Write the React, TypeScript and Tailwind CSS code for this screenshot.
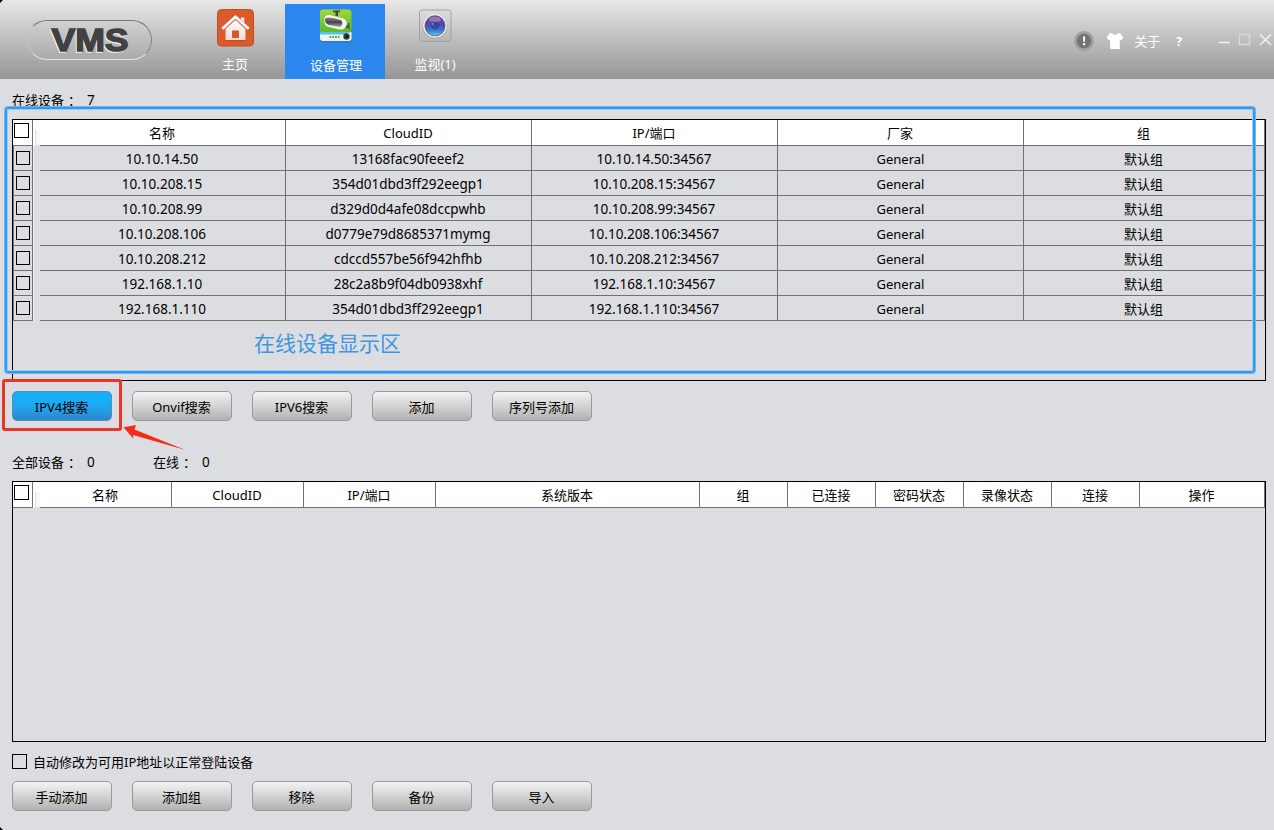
import { ReactNode } from 'react';
import { clsx } from 'clsx';

interface Device {
  name: string;
  cloudId: string;
  address: string;
}

const devices: Device[] = [
  { name: '10.10.14.50', cloudId: '13168fac90feeef2', address: '10.10.14.50:34567' },
  { name: '10.10.208.15', cloudId: '354d01dbd3ff292eegp1', address: '10.10.208.15:34567' },
  { name: '10.10.208.99', cloudId: 'd329d0d4afe08dccpwhb', address: '10.10.208.99:34567' },
  { name: '10.10.208.106', cloudId: 'd0779e79d8685371mymg', address: '10.10.208.106:34567' },
  { name: '10.10.208.212', cloudId: 'cdccd557be56f942hfhb', address: '10.10.208.212:34567' },
  { name: '192.168.1.10', cloudId: '28c2a8b9f04db0938xhf', address: '192.168.1.10:34567' },
  { name: '192.168.1.110', cloudId: '354d01dbd3ff292eegp1', address: '192.168.1.110:34567' },
];

const onlineColumns = [
  { label: '名称', width: 'w-[246px]' },
  { label: 'CloudID', width: 'w-[246px]' },
  { label: 'IP/端口', width: 'w-[246px]' },
  { label: '厂家', width: 'w-[246px]' },
  { label: '组', width: 'w-[241px]' },
];

const allColumns = [
  { label: '名称', width: 'w-[132px]' },
  { label: 'CloudID', width: 'w-[132px]' },
  { label: 'IP/端口', width: 'w-[132px]' },
  { label: '系统版本', width: 'w-[264px]' },
  { label: '组', width: 'w-[88px]' },
  { label: '已连接', width: 'w-[88px]' },
  { label: '密码状态', width: 'w-[88px]' },
  { label: '录像状态', width: 'w-[88px]' },
  { label: '连接', width: 'w-[88px]' },
  { label: '操作', width: 'w-[125px]' },
];

function HomeIcon() {
  return (
    <svg width="38" height="38" viewBox="0 0 38 38">
      <defs>
        <linearGradient id="homeWall" x1="0" y1="0" x2="0" y2="1">
          <stop offset="0" stopColor="#fff" />
          <stop offset="1" stopColor="#f3d9d0" />
        </linearGradient>
      </defs>
      <rect x="0.5" y="0.5" width="36" height="36.500" rx="4" fill="#d95a2b" stroke="#c24d22" />
      <path d="M8.500 19 18.500 10l10 9v12h-20z" fill="#9c3a16" opacity="0.450" transform="translate(0 1)" />
      <path d="M8.500 19 18.500 10l10 9v12h-20z" fill="url(#homeWall)" />
      <path d="M23.800 8.500h3.500v8h-3.500z" fill="#fbeee9" />
      <path d="m5.300 20.300 13.200-12 13.200 12" fill="none" stroke="#d06a45" strokeWidth="4" />
      <path d="m5.300 19.800 13.200-12 13.200 12" fill="none" stroke="#fff" strokeWidth="2.600" />
      <path d="M15 21.500h7v7.500h-7z" fill="#cf5a30" />
    </svg>
  );
}

function CameraIcon() {
  return (
    <svg width="34" height="34" viewBox="0 0 34 34">
      <defs>
        <linearGradient id="camGreen" x1="0" y1="0" x2="0" y2="1">
          <stop offset="0" stopColor="#a2d83a" />
          <stop offset="1" stopColor="#3fae22" />
        </linearGradient>
        <linearGradient id="camBody" x1="0" y1="0" x2="0" y2="1">
          <stop offset="0" stopColor="#8a8c8e" />
          <stop offset="0.5" stopColor="#454545" />
          <stop offset="1" stopColor="#a5a7a9" />
        </linearGradient>
      </defs>
      <rect x="1" y="1" width="31.5" height="32.500" rx="3" fill="#2c6f9c" opacity="0.5" />
      <rect x="1" y="0.5" width="31.5" height="31.5" rx="3" fill="url(#camGreen)" />
      <path d="M1 23h31.5v6a3 3 0 0 1-3 3H4a3 3 0 0 1-3-3z" fill="#eef4f5" />
      <path d="M1 23h31.5l-7 2.5H1z" fill="#52c4e8" />
      <path d="M14 1.500h7v1.800h-2V7h-2.500V3.300H14z" fill="#3d4a38" />
      <path d="m26 17 3-1v-2h1.500v6H29v-1.500l-3 1z" fill="#4b524b" />
      <path d="M5.500 9c.5-3 3.500-3.600 7-2.600l11 2.800c4 1.200 5 4.400 3.500 8.300-1.200 2.700-3.700 3.500-6.500 2.900L9 17.800c-3-.8-4.200-4.800-3.500-8.800z" fill="#f4f6f6" />
      <path d="M6 9.500c2-1.200 5-1 8-.4l7.500 2c2.500 1 2.500 6-.5 6.800L9.500 16C7 15.200 5.600 12.500 6 9.500z" fill="url(#camBody)" />
      <path d="M10.500 28h10" stroke="#4eae35" strokeWidth="2" strokeDasharray="1.800 1" />
      <circle cx="27.500" cy="27.500" r="3.200" fill="#333a3d" />
      <circle cx="27.500" cy="27.500" r="1.200" fill="#10171a" />
    </svg>
  );
}

function LensIcon() {
  return (
    <svg width="34" height="34" viewBox="0 0 34 34">
      <defs>
        <linearGradient id="lensPlate" x1="0" y1="0" x2="0" y2="1">
          <stop offset="0" stopColor="#dedede" />
          <stop offset="1" stopColor="#b5b5b5" />
        </linearGradient>
        <linearGradient id="lensGlass" x1="0" y1="0" x2="0" y2="1">
          <stop offset="0" stopColor="#6f4c9a" />
          <stop offset="0.450" stopColor="#5149ae" />
          <stop offset="0.750" stopColor="#337fcd" />
          <stop offset="1" stopColor="#65c5e9" />
        </linearGradient>
      </defs>
      <rect x="0.500" y="1" width="31.500" height="31.500" rx="3" fill="url(#lensPlate)" stroke="#a0a0a0" />
      <circle cx="16" cy="17.300" r="12.300" fill="#999" />
      <circle cx="16" cy="16.800" r="12" fill="#ededed" />
      <circle cx="16" cy="16.800" r="10.500" fill="#6b5f86" />
      <circle cx="16" cy="16.800" r="9.700" fill="url(#lensGlass)" />
      <circle cx="16" cy="16" r="4.500" fill="#33308f" opacity="0.500" />
      <ellipse cx="16" cy="10.500" rx="6" ry="2.800" fill="#c9a7d8" opacity="0.450" />
      <circle cx="13.500" cy="15" r="1" fill="#a9b8f5" opacity="0.700" />
    </svg>
  );
}

function Tab({ icon, label, active }: { icon: ReactNode; label: string; active?: boolean }) {
  return (
    <button
      className={clsx(
        'flex h-[75px] w-[100px] flex-col items-center text-[13px] leading-5 text-white',
        active ? 'bg-[#2b87ee]' : ''
      )}
    >
      <span className="flex h-[50px] items-start justify-center pt-[5px] pl-px">{icon}</span>
      <span className={active ? 'pt-px pl-0.5' : ''}>{label}</span>
    </button>
  );
}

function CheckBox({ className }: { className?: string }) {
  return <span className={clsx('block shrink-0 border border-black', className)} />;
}

function Button({ label, active }: { label: string; active?: boolean }) {
  return (
    <button
      className={clsx(
        'h-[30px] w-[100px] rounded-[5px] border pt-[3px] pr-px text-[13px] leading-none',
        active
          ? 'border-[#4c93bd] bg-linear-to-b from-[#18adf7] from-40% to-[#2e86cb]'
          : 'border-[#999a9b] bg-linear-to-b from-[#f4f4f4] to-[#b2b2b2]'
      )}
    >
      {label}
    </button>
  );
}

function Counter({ label, value, className }: { label: string; value: number; className?: string }) {
  return (
    <div className={clsx('flex items-center', className)}>
      <span>{label}</span>
      <span className="ml-1 w-[19px]">：</span>
      <span className="pt-px text-[13.5px]">{value}</span>
    </div>
  );
}

function TableHead({ columns }: { columns: { label: string; width: string }[] }) {
  return (
    <div className="flex h-[26px] bg-white">
      <div className="w-5 border-r border-b border-[#707174] pt-[3px] pl-px">
        <CheckBox className="size-[15px]" />
      </div>
      <div className="flex w-[7px] items-end pl-0.5">
        <span className="h-4 w-[5px] border-b border-l border-[#dedede] bg-[#f7f7f7]" />
      </div>
      {columns.map((column, index) => (
        <div
          key={index}
          className={clsx('flex items-center justify-center border-r border-b border-[#707174] pt-0.5 pr-px', column.width)}
        >
          {column.label}
        </div>
      ))}
    </div>
  );
}

function DeviceRow({ device }: { device: Device }) {
  const cells = [device.name, device.cloudId, device.address, 'General', '默认组'];
  return (
    <div className="flex h-[25px]">
      <div className="w-5 border-x border-b border-[#707174] pt-[5px] pl-0.5">
        <CheckBox className="size-3.5" />
      </div>
      <div className="w-[7px] border-l border-[#eeeeef]" />
      {cells.map((cell, index) => (
        <div
          key={index}
          className={clsx(
            'flex items-center justify-center border-r border-b border-[#707174] pt-[3px]',
            onlineColumns[index].width,
            index < 3 && 'pr-px text-[13.5px]',
            index === 4 && 'pr-px'
          )}
        >
          {cell}
        </div>
      ))}
    </div>
  );
}

export default function App() {
  return (
    <div className="relative flex h-[830px] w-[1274px] flex-col overflow-hidden bg-[#dcdde1] font-['Noto_Sans','Noto_Sans_CJK_SC',sans-serif] text-[13px] leading-none text-black">
      {/* 顶部导航 */}
      <header className="flex h-[79px] shrink-0 items-start bg-linear-to-b from-[#e8e8e8] to-[#969696]">
        <div className="mt-5 ml-[27px] flex h-10 w-[125px] items-center justify-center rounded-full border border-t-[#777] border-r-[#858585] border-b-[#dedede] border-l-[#c4c4c4]">
          <svg width="100" height="38" viewBox="0 0 100 38" className="font-['Liberation_Sans',Arial,sans-serif] text-[32px] font-bold">
            <text x="10.500" y="31" textLength="77" lengthAdjust="spacingAndGlyphs" fill="#f1f1f1" stroke="#f1f1f1" strokeWidth="1.500">VMS</text>
            <text x="11.500" y="30" textLength="77" lengthAdjust="spacingAndGlyphs" fill="#414141" stroke="#414141" strokeWidth="1.500">VMS</text>
          </svg>
        </div>
        <nav className="mt-1 ml-[33px] flex">
          <Tab icon={<HomeIcon />} label="主页" />
          <Tab icon={<CameraIcon />} label="设备管理" active />
          <Tab icon={<LensIcon />} label="监视(1)" />
        </nav>
        <div className="mt-[30px] mr-0.5 ml-auto flex h-[22px] items-center text-white">
          <svg width="20" height="20" viewBox="0 0 20 20">
            <circle cx="10" cy="10" r="10" fill="#a0a0a0" />
            <circle cx="10" cy="10" r="7.300" fill="#747474" />
            <path d="M9 5.500h2.200l-.4 5.500H9.400zM9 12.300h2.200v2H9z" fill="#fff" />
          </svg>
          <svg width="18" height="18" viewBox="0 0 18 18" className="ml-3" fill="#fff">
            <path d="M5.500 1Q9 4.300 12.500 1L14.500 1.500 17.500 6 14.500 8.500 13.800 7.800V17H4.200V7.800L3.500 8.500.5 6 3.500 1.500z" />
          </svg>
          <span className="ml-2.5 pt-px">关于</span>
          <span className="ml-4 pt-0.5 text-xs font-bold">?</span>
          <svg width="54" height="18" viewBox="0 0 54 18" className="-mt-[3px] ml-9" fill="none" stroke="#f2f2f2" strokeWidth="1.500">
            <path d="M1 11.500h11" />
            <path d="M21.500 3.500h10v10h-10z" stroke="#d8d8d8" />
            <path d="m42 3.500 11 10.500M53 3.500 42 14" />
          </svg>
        </div>
      </header>

      <main className="flex flex-col pl-3">
        {/* 在线设备 */}
        <div className="flex h-10 items-center pt-[3px]">
          <Counter label="在线设备" value={7} />
        </div>
        <section className="h-[262px] w-[1254px] border border-black">
          <TableHead columns={onlineColumns} />
          {devices.map(device => (
            <DeviceRow key={device.name} device={device} />
          ))}
        </section>
        <div className="mt-2.5 flex gap-5">
          <Button label="IPV4搜索" active />
          <Button label="Onvif搜索" />
          <Button label="IPV6搜索" />
          <Button label="添加" />
          <Button label="序列号添加" />
        </div>

        {/* 全部设备 */}
        <div className="flex h-[60px] items-center pt-[23px]">
          <Counter label="全部设备" value={0} className="w-[141px]" />
          <Counter label="在线" value={0} />
        </div>
        <section className="h-[261px] w-[1254px] border border-black">
          <TableHead columns={allColumns} />
        </section>
        <label className="flex h-[39px] items-center gap-[6px]">
          <CheckBox className="size-[15px]" />
          <span className="pt-px">自动修改为可用IP地址以正常登陆设备</span>
        </label>
        <div className="flex gap-5">
          <Button label="手动添加" />
          <Button label="添加组" />
          <Button label="移除" />
          <Button label="备份" />
          <Button label="导入" />
        </div>
      </main>

      {/* 标注层 */}
      <div className="pointer-events-none absolute top-[107px] left-[5px] h-[266px] w-[1250px] rounded-[3px] border-2 border-[#3597e5] shadow-[0_0_0_1px_#6ab7f2,inset_0_0_0_1px_#9bcff5]" />
      <div className="pointer-events-none absolute top-[333px] left-[254px] text-[21px] whitespace-nowrap text-[#3f96e2]">
        在线设备显示区
      </div>
      <div className="pointer-events-none absolute top-[379px] left-0.5 h-[52px] w-[120px] rounded-[3px] border-3 border-[#e93629]" />
      <svg className="pointer-events-none absolute top-[422px] left-[122px]" width="66" height="30" viewBox="0 0 66 30" fill="#f32b1c">
        <path d="M1.500 5.200 14 3l-1.500 4.500L63.500 28 11 13l.3 3.800z" />
      </svg>
      <svg className="absolute top-0 left-0" width="3" height="3">
        <path d="M0 0h3L0 3z" />
      </svg>
      <svg className="absolute bottom-0 left-0" width="3" height="3">
        <path d="M0 0l3 3H0z" />
      </svg>
    </div>
  );
}
